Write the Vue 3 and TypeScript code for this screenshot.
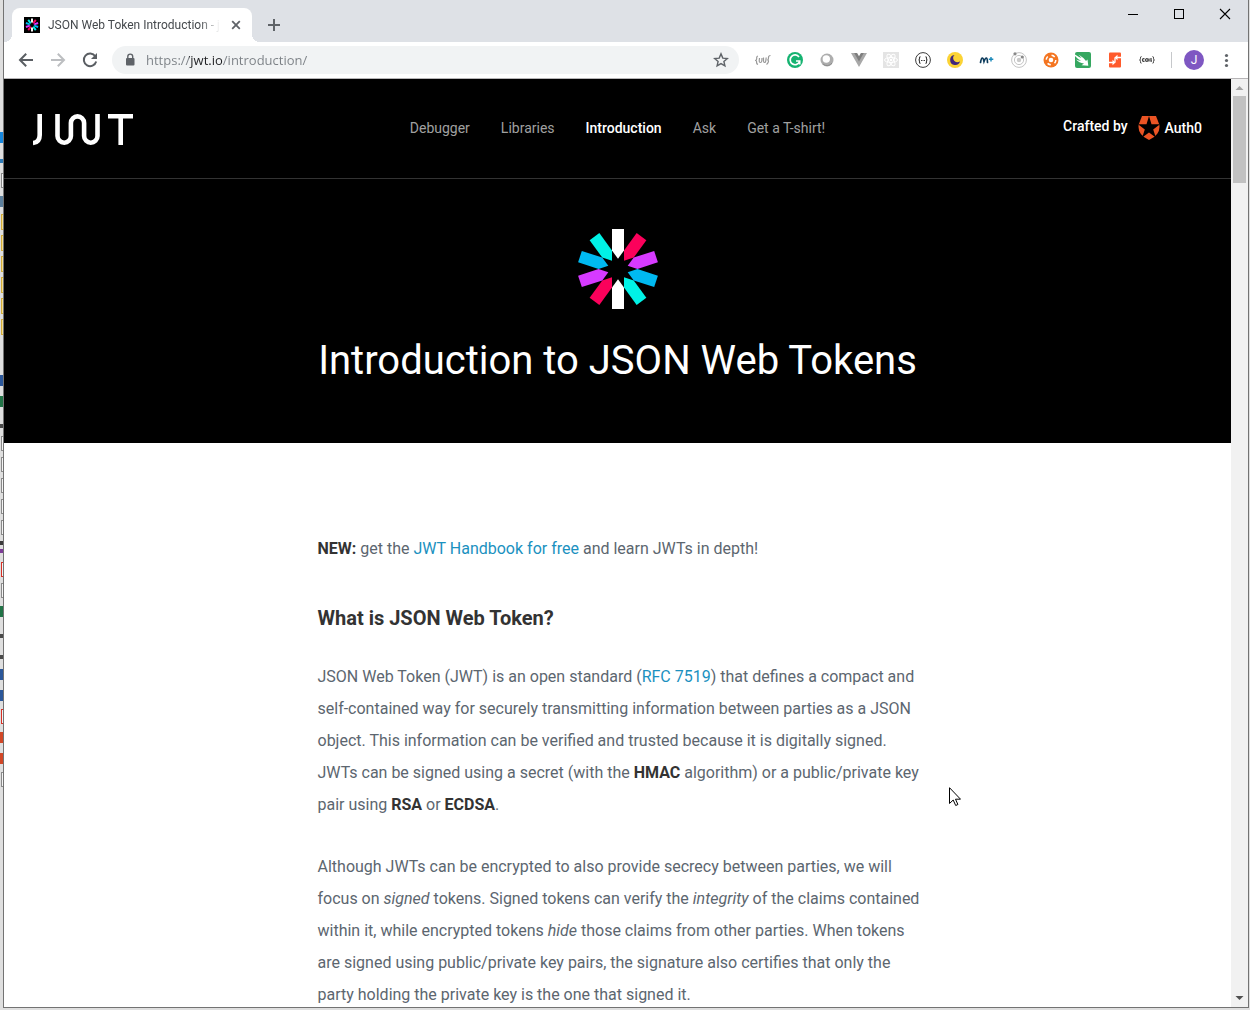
<script setup lang="ts">
import { ref } from 'vue'

interface Petal { angle: number; color: string }
interface NavItem { label: string; active?: boolean }
interface DeskItem { y: number; kind: 'folder' | 'page' | 'tile' | 'bar'; color: string }

const palette = ['#ffffff', '#fb015b', '#d63aff', '#00b9f1', '#00f2e6']
const petals: Petal[] = Array.from({ length: 10 }, (_, i) => ({ angle: i * 36, color: palette[i % 5] }))

const nav: NavItem[] = [
  { label: 'Debugger' },
  { label: 'Libraries' },
  { label: 'Introduction', active: true },
  { label: 'Ask' },
  { label: 'Get a T-shirt!' },
]

const address = ref('https://jwt.io/introduction/')

const desk: DeskItem[] = [
  { y: 132, kind: 'tile', color: '#1787dd' },
  { y: 159, kind: 'bar', color: '#2f7cb8' },
  { y: 173, kind: 'page', color: '#8a8a8a' },
  { y: 196, kind: 'tile', color: '#5c7f9c' },
  ...[214, 235, 256, 277, 298, 319].map((y): DeskItem => ({ y, kind: 'folder', color: '#d2ac3a' })),
  { y: 375, kind: 'tile', color: '#2b579a' },
  { y: 396, kind: 'tile', color: '#217346' },
  { y: 424, kind: 'bar', color: '#4a4a4a' },
  ...[436, 457, 478, 499, 520].map((y): DeskItem => ({ y, kind: 'page', color: '#8a8a8a' })),
  { y: 541, kind: 'bar', color: '#3a3a3a' },
  { y: 549, kind: 'bar', color: '#7d3c98' },
  { y: 562, kind: 'page', color: '#d93025' },
  { y: 583, kind: 'page', color: '#8a8a8a' },
  { y: 606, kind: 'tile', color: '#217346' },
  { y: 634, kind: 'bar', color: '#4a4a4a' },
  { y: 655, kind: 'bar', color: '#4a4a4a' },
  { y: 669, kind: 'tile', color: '#2b579a' },
  { y: 690, kind: 'tile', color: '#2b579a' },
  { y: 709, kind: 'page', color: '#d93025' },
  { y: 732, kind: 'tile', color: '#d24726' },
  { y: 753, kind: 'tile', color: '#d24726' },
  { y: 772, kind: 'page', color: '#8a8a8a' },
]
</script>

<template>
  <div class="desktop">
    <svg class="desk-edge" width="3" height="1010" aria-hidden="true">
      <template v-for="d in desk" :key="d.y">
        <rect v-if="d.kind === 'tile'" x="0" :y="d.y" width="3" height="11" :fill="d.color" />
        <rect v-else-if="d.kind === 'bar'" x="0" :y="d.y" width="3" height="4" :fill="d.color" />
        <rect v-else-if="d.kind === 'folder'" x="1.5" :y="d.y + 0.5" width="4" height="15" fill="#f4dc8c" :stroke="d.color" />
        <rect v-else x="1.5" :y="d.y + 0.5" width="4" height="14" fill="#f4f4f4" :stroke="d.color" />
      </template>
    </svg>

    <div class="window">
      <div class="titlebar">
        <div class="tab">
          <svg class="favicon" viewBox="-50 -50 100 100" width="16" height="16" aria-hidden="true">
            <rect x="-50" y="-50" width="100" height="100" fill="#000" />
            <path v-for="p in petals" :key="p.angle" d="M-6-40H6V-18.5L0-10.2-6-18.5Z" :fill="p.color" :transform="`rotate(${p.angle})`" />
          </svg>
          <span class="tab-title">JSON Web Token Introduction - j</span>
          <button class="icon-btn tab-close" aria-label="Close tab">
            <svg width="16" height="16" viewBox="0 0 16 16"><path d="M4.2 4.2l7.6 7.6M11.8 4.2l-7.6 7.6" stroke="#5f6368" stroke-width="1.8" /></svg>
          </button>
        </div>
        <button class="icon-btn new-tab" aria-label="New tab">
          <svg width="16" height="16" viewBox="0 0 16 16"><path d="M8 2v12M2 8h12" stroke="#5f6368" stroke-width="2" /></svg>
        </button>
        <div class="controls">
          <button aria-label="Minimize"><svg width="12" height="12"><path d="M1 6.5h10" stroke="#000" /></svg></button>
          <button aria-label="Maximize"><svg width="12" height="12"><rect x="1.5" y="1.5" width="9" height="9" fill="none" stroke="#000" /></svg></button>
          <button aria-label="Close"><svg width="12" height="12"><path d="M1 1l10 10M11 1L1 11" stroke="#000" stroke-width="1.1" /></svg></button>
        </div>
      </div>

      <div class="toolbar">
        <button class="icon-btn" aria-label="Back">
          <svg width="16" height="16" viewBox="0 0 16 16"><path d="M15 8H2.5M8.2 1.8L2 8l6.2 6.2" fill="none" stroke="#5a5e63" stroke-width="2" /></svg>
        </button>
        <button class="icon-btn" aria-label="Forward">
          <svg width="16" height="16" viewBox="0 0 16 16"><path d="M1 8h12.5M7.8 1.8L14 8l-6.2 6.2" fill="none" stroke="#bcbec1" stroke-width="2" /></svg>
        </button>
        <button class="icon-btn" aria-label="Reload">
          <svg width="16" height="16" viewBox="0 0 16 16"><path d="M13.3 4.2A6.3 6.3 0 1 0 14.2 9.5" fill="none" stroke="#5a5e63" stroke-width="2" /><path d="M15 1v6H9z" fill="#5a5e63" /></svg>
        </button>
        <div class="omnibox">
          <svg width="12" height="14" viewBox="0 0 12 14" aria-hidden="true"><rect x="2" y="5" width="8.5" height="7.5" rx="1" fill="#5f6368" /><path d="M3.8 5.5V3.6a2.45 2.45 0 0 1 4.9 0v1.9" fill="none" stroke="#5f6368" stroke-width="1.4" /></svg>
          <input v-model="address" type="text" aria-label="Address" spellcheck="false" />
          <button class="icon-btn" aria-label="Bookmark">
            <svg width="16" height="16" viewBox="0 0 16 16"><path d="M8 1.9l1.8 4.2 4.5.4-3.4 3 1 4.4L8 11.6l-3.9 2.3 1-4.4-3.4-3 4.5-.4z" fill="none" stroke="#5f6368" stroke-width="1.4" /></svg>
          </button>
        </div>

        <div class="extensions">
          <svg width="16" height="16" viewBox="0 0 16 16"><path d="M3 4q-1.500.3-1.300 2T.600 8.500q1.200.3 1 1.800T3 12.500M15.500 3.500q-2 0-2 2t-.7 2.500q1 .5.500 2T11.500 12.500M4.500 6l-.3 3q0 1.500 1.200 1.500T6.800 9L7 6M8.500 5.500v3.300q0 1.700 1 1.700t1.300-1.700l.4-3.300" fill="none" stroke="#999" stroke-width="1.200" /></svg>
          <svg width="16" height="16" viewBox="0 0 16 16"><circle cx="8" cy="8" r="8" fill="#15b371" /><path d="M12 4.900A4.900 4.900 0 1 0 12.400 10.200M12.700 12.500V9H9" fill="none" stroke="#fff" stroke-width="1.700" /></svg>
          <svg width="16" height="16" viewBox="0 0 16 16"><circle cx="8" cy="8" r="6.500" fill="#adadad" /><circle cx="7.300" cy="7" r="3.700" fill="#fff" /><path d="M4 12a6 6 0 0 0 9-1" fill="none" stroke="#8c8c8c" /></svg>
          <svg width="16" height="16" viewBox="0 0 16 16"><path d="M0 1h5l3 5 3-5h5L8 15z" fill="#a8a8a8" /><path d="M3.200 1h2.900L8 4.200 9.900 1h2.900L8 9.400z" fill="#7e7e7e" /></svg>
          <svg width="16" height="16" viewBox="0 0 16 16"><rect width="16" height="16" fill="#e4e4e4" /><g fill="none" stroke="#fff"><ellipse cx="8" cy="8" rx="6.500" ry="2.500" /><ellipse cx="8" cy="8" rx="6.500" ry="2.500" transform="rotate(60 8 8)" /><ellipse cx="8" cy="8" rx="6.500" ry="2.500" transform="rotate(120 8 8)" /></g><circle cx="8" cy="8" r="1.300" fill="#fff" /></svg>
          <svg width="16" height="16" viewBox="0 0 16 16"><circle cx="8" cy="8" r="7.400" fill="#fff" stroke="#3c3c3c" /><path d="M5.600 4.800q-1.300 0-1.100 1.500T3.600 8q1.100 0 .9 1.700t1.100 1.500M10.400 4.800q1.300 0 1.100 1.500t.9 1.700q-1.100 0-.9 1.700t-1.100 1.500" fill="none" stroke="#3c3c3c" stroke-width="1.100" /><path d="M6 8.500h1M7.500 8.500h1M9 8.500h1" stroke="#3c3c3c" /></svg>
          <svg width="16" height="16" viewBox="0 0 16 16"><circle cx="8" cy="8" r="8" fill="#fbd335" /><path d="M7.500 3A5 5 0 1 0 13 9.200 4 4 0 0 1 7.500 3z" fill="#41267b" /></svg>
          <svg width="16" height="16" viewBox="0 0 16 16"><path d="M1.500 10.500q.8-4.500 1.800-4.500t1.700 3.500q1.300-3.500 2.300-3.500t1.200 4.500" fill="none" stroke="#0b3a5b" stroke-width="1.700" stroke-linecap="round" /><path d="M12 5v4.500M9.800 7.200h4.500" stroke="#1687b8" stroke-width="1.400" /></svg>
          <svg width="16" height="16" viewBox="0 0 16 16"><g fill="none" stroke="#c4c4c4"><circle cx="8" cy="8" r="7.400" /><circle cx="8" cy="8" r="4.600" /></g><circle cx="8" cy="8" r="2.200" fill="#c9c9c9" /><circle cx="4" cy="1.800" r="1.600" fill="#888" /><circle cx="11.300" cy="5" r="1.600" fill="#888" /></svg>
          <svg width="16" height="16" viewBox="0 0 16 16"><circle cx="8" cy="8" r="7.500" fill="#f47521" /><circle cx="8" cy="8" r="2.300" fill="#fff" /><circle cx="8" cy="8" r="4.800" fill="none" stroke="#fff" stroke-width="1.500" stroke-dasharray="3.500 4.040" /></svg>
          <svg width="16" height="16" viewBox="0 0 16 16"><rect width="16" height="16" rx="2" fill="#35a760" /><path d="M0 2.500q3.500 2.500 6.500 3.500L3.500 2.500q5 3 7.500 6.500l1.500-1.500.8 6.300-6.800-.6L9 11.500Q4 11 1 7.500q3 1.300 5 1.200Q2.500 7 0 4z" fill="#fff" /></svg>
          <svg width="16" height="16" viewBox="0 0 16 16"><rect x="2" y=".5" width="12" height="15" rx="1" fill="#ff5a2b" /><path d="M2 10.500h4.500M9.500 5.500H14M8 5.500v5" fill="none" stroke="#fff" stroke-width="1.300" /><path d="M5.500 7.800v5.400L8.500 10.500zM10.500 2.800v5.400L7.500 5.500z" fill="#fff" /></svg>
          <svg width="16" height="16" viewBox="0 0 16 16"><g fill="none" stroke="#444" stroke-width="1"><path d="M2.500 4.500q-1.200 0-1 1.700T.5 8q1.200 0 1 1.700t1 1.500M13.500 4.500q1.200 0 1 1.700t1 1.800q-1.200 0-1 1.700t-1 1.500" /><path d="M5.500 6.800q-2-.7-2 1.200t2 1.200M10 9.500V6.500M12 6v3.200h1" stroke-width="1.300" /><circle cx="7.800" cy="8" r="1.300" stroke-width="1.200" /></g></svg>
        </div>
        <span class="divider"></span>
        <button class="avatar" aria-label="Profile">J</button>
        <button class="icon-btn" aria-label="Menu">
          <svg width="16" height="16" viewBox="0 0 16 16" fill="#5f6368"><circle cx="8.500" cy="3.500" r="1.600" /><circle cx="8.500" cy="8.500" r="1.600" /><circle cx="8.500" cy="13.500" r="1.600" /></svg>
        </button>
      </div>

      <div class="viewport">
        <div class="page">
          <header class="site-header">
            <a href="#" class="brand" aria-label="JWT">
              <svg width="100" height="33" viewBox="0 0 100 33" fill="none" stroke="#fff" stroke-width="4.600">
                <path d="M6.700 1V22q0 7.500-6.700 8" />
                <path d="M24.500 1V23a6.700 6.700 0 0 0 13.400 0V10a6.600 6.600 0 0 1 13.200 0V23a6.700 6.700 0 0 0 13.400 0V1" />
                <path d="M75 3.300h25M87.700 3V32" />
              </svg>
            </a>
            <nav>
              <a v-for="n in nav" :key="n.label" href="#" :class="{ active: n.active }">{{ n.label }}</a>
            </nav>
            <div class="crafted">
              <span>Crafted by</span>
              <a href="#">
                <svg width="22" height="24" viewBox="0 0 22 24" aria-hidden="true">
                  <path d="M4 0H18L21.300 8.500Q23 18.500 11 24-1 18.500.7 8.500Z" fill="#eb5424" />
                  <path d="M11 0l2.500 8.200H22l-6.800 5.200 2.600 8.200L11 16.500l-6.800 5.100 2.600-8.200L0 8.200h8.500z" fill="#000" />
                </svg>
                <span>Auth0</span>
              </a>
            </div>
          </header>

          <section class="hero">
            <svg width="80" height="80" viewBox="-40 -40 80 80" aria-hidden="true">
              <path v-for="p in petals" :key="p.angle" d="M-6-40H6V-18.5L0-10.2-6-18.5Z" :fill="p.color" :transform="`rotate(${p.angle})`" />
            </svg>
            <h1>Introduction to JSON Web Tokens</h1>
          </section>

          <article>
            <p><strong>NEW:</strong> get the <a href="#">JWT Handbook for free</a> and learn JWTs in depth!</p>
            <h2>What is JSON Web Token?</h2>
            <p>
              JSON Web Token (JWT) is an open standard (<a href="#">RFC 7519</a>) that defines a compact and<br />
              self-contained way for securely transmitting information between parties as a JSON<br />
              object. This information can be verified and trusted because it is digitally signed.<br />
              JWTs can be signed using a secret (with the <strong>HMAC</strong> algorithm) or a public/private key<br />
              pair using <strong>RSA</strong> or <strong>ECDSA</strong>.
            </p>
            <p>
              Although JWTs can be encrypted to also provide secrecy between parties, we will<br />
              focus on <em>signed</em> tokens. Signed tokens can verify the <em>integrity</em> of the claims contained<br />
              within it, while encrypted tokens <em>hide</em> those claims from other parties. When tokens<br />
              are signed using public/private key pairs, the signature also certifies that only the<br />
              party holding the private key is the one that signed it.
            </p>
          </article>
        </div>

        <div class="scrollbar" aria-hidden="true">
          <svg width="17" height="17"><path d="M4.500 11L8.500 7l4 4z" fill="#a3a3a3" /></svg>
          <span class="thumb"></span>
          <svg width="17" height="17"><path d="M4.500 6l4 4 4-4z" fill="#505050" /></svg>
        </div>
      </div>
    </div>

    <svg class="cursor" width="12" height="20" viewBox="0 0 12 20" aria-hidden="true">
      <path d="M.5.700V16.500L4.200 13l2.500 5.500 2.200-1L6.500 12.200h5z" fill="#fff" stroke="#000" />
    </svg>
  </div>
</template>

<style>
body { overflow: hidden; }
</style>

<style scoped>
* { box-sizing: border-box; }

.desktop {
  position: relative;
  display: flex;
  height: 100vh;
  padding: 0 1px 2px 0;
  overflow: hidden;
  background: #dfdfdf;
  font-family: Roboto, "Liberation Sans", sans-serif;
}
.desk-edge { flex: none; }
.window {
  flex: 1;
  min-width: 0;
  display: flex;
  flex-direction: column;
  border: 1px solid #737373;
  border-top: 0;
  background: #fff;
}

button { padding: 0; border: 0; background: none; font-family: inherit; }
.icon-btn { flex: none; width: 16px; height: 16px; }
.icon-btn svg, .controls svg { display: block; }

.titlebar {
  flex: none;
  display: flex;
  align-items: flex-end;
  height: 42px;
  padding-left: 8px;
  background: #dee1e6;
}
.tab {
  position: relative;
  display: flex;
  align-items: center;
  gap: 8px;
  width: 240px;
  height: 34px;
  padding: 0 8px 0 12px;
  border-radius: 8px 8px 0 0;
  background: #fff;
}
.tab::before, .tab::after {
  content: "";
  position: absolute;
  bottom: 0;
  width: 8px;
  height: 8px;
}
.tab::before { left: -8px; background: radial-gradient(circle at 0 0, transparent 8px, #fff 8px); }
.tab::after { right: -8px; background: radial-gradient(circle at 100% 0, transparent 8px, #fff 8px); }
.favicon { flex: none; }
.tab-title {
  flex: 1;
  white-space: nowrap;
  font-size: 12px;
  line-height: 16px;
  color: #45494d;
  mask-image: linear-gradient(90deg, #000 88%, transparent);
}
.new-tab { margin: 0 0 9px 14px; }
.controls { display: flex; align-self: flex-start; margin-left: auto; }
.controls button { display: grid; place-items: center; width: 46px; height: 28px; }

.toolbar {
  flex: none;
  display: flex;
  align-items: center;
  gap: 16px;
  height: 37px;
  padding: 0 14px;
  border-bottom: 1px solid #b6b4b6;
}
.omnibox {
  flex: 1;
  display: flex;
  align-items: center;
  gap: 10px;
  height: 28px;
  margin-left: -2px;
  padding: 0 10px 0 12px;
  border-radius: 14px;
  background: #f1f3f4;
}
.omnibox input {
  flex: 1;
  min-width: 0;
  padding: 0;
  border: 0;
  outline: 0;
  font: 13px/20px "Open Sans", "Noto Sans", sans-serif;
  color: transparent;
  background: linear-gradient(90deg, #7b8085 43px, #202124 43px 77px, #7b8085 77px);
  background-clip: text;
}
.extensions { display: flex; gap: 16px; }
.divider { width: 1px; height: 16px; background: #c6c8cb; }
.avatar {
  width: 20px;
  height: 20px;
  margin: 0 -2px 0 -4px;
  border-radius: 50%;
  background: #7e57c2;
  color: #fff;
  font-size: 12px;
  line-height: 20px;
}

.viewport { flex: 1; min-height: 0; display: flex; }
.page { flex: 1; min-width: 0; overflow: hidden; }

.site-header {
  display: grid;
  grid-template-columns: 1fr auto 1fr;
  align-items: center;
  height: 100px;
  padding: 0 29px;
  border-bottom: 1px solid #333;
  background: #000;
}
.brand { padding-top: 2px; }
.brand svg { display: block; }
nav { display: flex; gap: 31px; padding-bottom: 2px; }
nav a, .crafted { font-size: 14px; line-height: 20px; }
nav a { color: #a0a0a0; text-decoration: none; }
nav a.active { color: #fff; font-weight: 500; }
.crafted {
  display: flex;
  align-items: flex-start;
  justify-content: flex-end;
  gap: 10px;
  padding-bottom: 2px;
  color: #fff;
  font-weight: 500;
}
.crafted a { display: flex; align-items: center; gap: 5px; color: #fff; text-decoration: none; }

.hero {
  display: flex;
  flex-direction: column;
  align-items: center;
  height: 264px;
  padding-top: 50px;
  background: #000;
  color: #fff;
}
h1 { margin: 28px 0 0; font-size: 40px; line-height: 48px; font-weight: 400; white-space: nowrap; }

article {
  width: 600px;
  max-width: 100%;
  margin: 0 auto;
  padding-top: 90px;
  font-size: 16px;
  line-height: 32px;
  color: #5c666f;
  white-space: nowrap;
}
article p { margin: 0 0 30px; }
article h2 { margin: 0 0 27px; padding-top: 7px; font-size: 20px; line-height: 32px; font-weight: 700; color: #333; }
article strong { color: #333; font-weight: 700; }
article a { color: #1b91bf; text-decoration: none; }

.scrollbar {
  flex: none;
  display: flex;
  flex-direction: column;
  align-items: center;
  width: 17px;
  background: #f1f1f1;
}
.scrollbar svg { display: block; }
.thumb { width: 13px; height: 87px; margin-bottom: auto; background: #c1c1c1; }

.cursor { position: absolute; left: 949px; top: 787px; }
</style>
